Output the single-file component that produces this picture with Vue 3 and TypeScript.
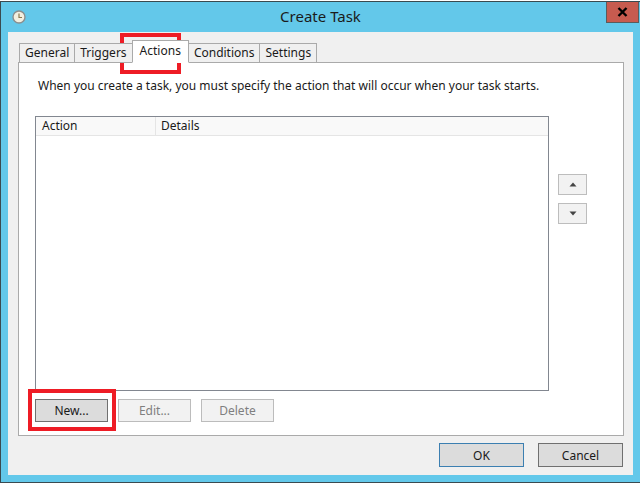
<script setup lang="ts">
const tabs = ['General', 'Triggers', 'Actions', 'Conditions', 'Settings']
</script>

<template>
  <div class="screen">
    <div class="win">
      <div class="titlebar">
        <svg class="clock" width="14" height="14" viewBox="0 0 14 14">
          <circle cx="7" cy="7" r="6" fill="#f3efe0" stroke="#8b8f8f" stroke-width="1.4" />
          <path d="M7 3.5V7.5H10" fill="none" stroke="#8a7a50" stroke-width="1.2" />
        </svg>
        <span class="title">Create Task</span>
        <div class="close">
          <svg width="11" height="10" viewBox="0 0 11 10"><path d="M1.5 1L9.5 9M9.5 1L1.5 9" stroke="#000" stroke-width="2.4" fill="none" /></svg>
        </div>
      </div>
      <div class="client">
        <div class="tabs">
          <div v-for="t in tabs" :key="t" class="tab" :class="{ active: t === 'Actions' }">{{ t }}</div>
        </div>
        <div class="panel">
          <p class="intro">When you create a task, you must specify the action that will occur when your task starts.</p>
          <div class="mid">
            <div class="table">
              <div class="thead">
                <div class="th first">Action</div>
                <div class="th">Details</div>
              </div>
            </div>
            <div class="arrows">
              <div class="arrow"><svg width="8" height="5" viewBox="0 0 8 5"><path d="M4 0.5L7.5 4.5H0.5Z" fill="#444" /></svg></div>
              <div class="arrow"><svg width="8" height="5" viewBox="0 0 8 5"><path d="M0.5 0.5H7.5L4 4.5Z" fill="#444" /></svg></div>
            </div>
          </div>
          <div class="actions">
            <div class="btn">New...</div>
            <div class="btn off">Edit...</div>
            <div class="btn off">Delete</div>
          </div>
        </div>
        <div class="footer">
          <div class="btn big ok">OK</div>
          <div class="btn big">Cancel</div>
        </div>
      </div>
    </div>
    <div class="mark mark-tab"></div>
    <div class="mark mark-new"></div>
  </div>
</template>

<style>
html, body { margin: 0; background: #fff; }
</style>

<style scoped>
.screen {
  position: relative;
  width: 640px;
  height: 485px;
  overflow: hidden;
  padding-top: 1px;
  box-sizing: border-box;
  font-family: "Noto Sans", "Open Sans", sans-serif;
  font-size: 12px;
  color: #1a1a1a;
}
.win {
  height: 482px;
  box-sizing: border-box;
  background: #63c8ea;
  border: solid #3a4a50;
  border-width: 1px 0 1px 1px;
  padding: 0 7px 7px 7px;
  display: flex;
  flex-direction: column;
}
.titlebar {
  height: 30px;
  flex: none;
  display: flex;
  align-items: center;
  justify-content: center;
  position: relative;
}
.clock { position: absolute; left: 4px; top: 8px; }
.title { font-size: 15px; color: #1b1b1b; margin-top: -2px; }
.close {
  position: absolute;
  right: -6px;
  top: 0;
  width: 33px;
  height: 21px;
  background: #c75b4f;
  border: 1px solid #5b5b5b;
  border-top: 0;
  box-sizing: border-box;
  display: flex;
  align-items: center;
  justify-content: center;
}
.client {
  flex: 1;
  background: #f0f0f0;
  display: flex;
  flex-direction: column;
  padding: 11px 9px 0 10px;
  min-height: 0;
}
.tabs { display: flex; height: 20px; padding-left: 1px; flex: none; position: relative; z-index: 1; }
.tab {
  box-sizing: border-box;
  height: 20px;
  padding: 0 5px;
  line-height: 18px;
  border: 1px solid #aaa;
  border-bottom: 1px solid #aaa;
  border-left-width: 0;
  background: #f0f0f0;
}
.tab:first-child { border-left-width: 1px; }
.tab.active {
  background: #fff;
  border-bottom-color: #fff;
  height: 23px;
  margin-top: -3px;
  line-height: 20px;
  padding: 0 7px;
  margin-left: -1px;
  border-left-width: 1px;
}
.panel {
  height: 374px;
  flex: none;
  box-sizing: border-box;
  background: #fff;
  border: 1px solid #aaa;
  border-top-color: #aaa;
  margin-top: -1px;
  padding: 14px 16px 0 16px;
  display: flex;
  flex-direction: column;
}
.intro { margin: 0 0 0 3px; line-height: 18px; height: 18px; white-space: nowrap; }
.mid { display: flex; margin-top: 21px; }
.table {
  width: 514px;
  height: 275px;
  box-sizing: border-box;
  border: 1px solid #828790;
}
.thead { display: flex; height: 19px; background: #f9f9f9; border-bottom: 1px solid #e5e5e5; box-sizing: border-box; }
.th { padding-left: 5px; line-height: 18px; }
.th.first { width: 120px; box-sizing: border-box; border-right: 1px solid #e5e5e5; padding-left: 6px; }
.arrows { display: flex; flex-direction: column; gap: 8px; margin: 58px 0 0 9px; }
.arrow {
  width: 29px;
  height: 21px;
  box-sizing: border-box;
  background: #f2f2f2;
  border: 1px solid #bdbdbd;
  display: flex;
  align-items: center;
  justify-content: center;
}
.actions { display: flex; gap: 10px; margin-top: 8px; }
.btn {
  width: 73px;
  height: 23px;
  box-sizing: border-box;
  background: #dcdcdc;
  border: 1px solid #707070;
  display: flex;
  align-items: center;
  justify-content: center;
}
.btn.off { background: #f2f2f2; border-color: #bcbcbc; color: #7f7f7f; }
.footer { display: flex; justify-content: flex-end; gap: 14px; margin-top: 7px; padding-right: 1px; }
.btn.big { width: 85px; height: 24px; }
.btn.ok { border-color: #3c7fb1; }
.mark { position: absolute; border: 4px solid #ee1c25; box-sizing: border-box; }
.mark-tab { left: 120px; top: 33px; width: 61px; height: 41px; }
.mark-new { left: 28px; top: 389px; width: 88px; height: 42px; }
</style>
